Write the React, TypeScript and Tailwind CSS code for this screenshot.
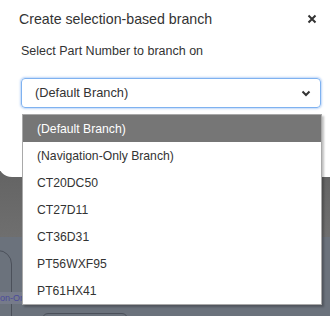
const options = [
  '(Default Branch)',
  '(Navigation-Only Branch)',
  'CT20DC50',
  'CT27D11',
  'CT36D31',
  'PT56WXF95',
  'PT61HX41',
];

export default function App() {
  return (
    <div
      className="relative w-[330px] h-[316px] overflow-hidden bg-[#6b727c]"
      style={{ fontFamily: '"Liberation Sans", Arial, sans-serif' }}
    >
      {/* page behind the overlay */}
      <div className="absolute left-0 top-0 w-full h-[237px] bg-gradient-to-b from-[#474747] to-[#6f6f6f]" />
      <div className="absolute left-[-40px] top-[250px] w-[52px] h-[90px] rounded-tr-[14px] border border-[#4b505a]" />
      <div className="absolute left-0 top-[292px] h-[12px] bg-[#767b8a] text-[9px] leading-[12px] text-[#4a4a9a] whitespace-nowrap">
        on-Onl
      </div>
      <div className="absolute left-[42px] top-[313px] w-[86px] h-[20px] rounded-[6px] border border-[#4b505a]" />

      {/* dialog */}
      <div className="relative ml-[-2px] w-[345px] h-[177px] bg-white rounded-bl-[14px] pl-[21px] pr-[23px] pt-[9px] text-[#333]">
        <div className="flex items-center justify-between">
          <h2 className="text-[14.2px] leading-[20px]">Create selection-based branch</h2>
          <svg width="10" height="10" viewBox="0 0 10 10" className="mr-[3px]">
            <path d="M1.5 1.5 L8.5 8.5 M8.5 1.5 L1.5 8.5" stroke="#333" strokeWidth="2" />
          </svg>
        </div>
        <p className="mt-[14px] ml-[2px] text-[12.5px] leading-[16px]">Select Part Number to branch on</p>
        <div className="mt-[19px] ml-[2px] w-[300px] h-[30px] rounded-[4px] border border-[#7fb2f0] shadow-[0_0_2px_1px_rgba(110,165,240,0.45)] flex items-center justify-between pl-[13px] pr-[9px]">
          <span className="text-[12.8px]">(Default Branch)</span>
          <svg width="10" height="7" viewBox="0 0 10 7">
            <path d="M1.5 1.5 L5 5 L8.5 1.5" stroke="#333" strokeWidth="2" fill="none" />
          </svg>
        </div>
      </div>

      {/* open option list */}
      <ul className="absolute left-[22px] top-[114px] w-[300px] border border-[#a9a9a9] bg-white shadow-[2px_2px_2px_rgba(0,0,0,0.25)]">
        {options.map((o, i) => (
          <li
            key={o}
            className={
              i === 0
                ? 'h-[27px] pl-[14px] pt-[1px] flex items-center text-[12.2px] bg-[#767676] text-white'
                : 'h-[27px] pl-[14px] pt-[1px] flex items-center text-[12.2px] text-[#333]'
            }
          >
            {o}
          </li>
        ))}
      </ul>
    </div>
  );
}
